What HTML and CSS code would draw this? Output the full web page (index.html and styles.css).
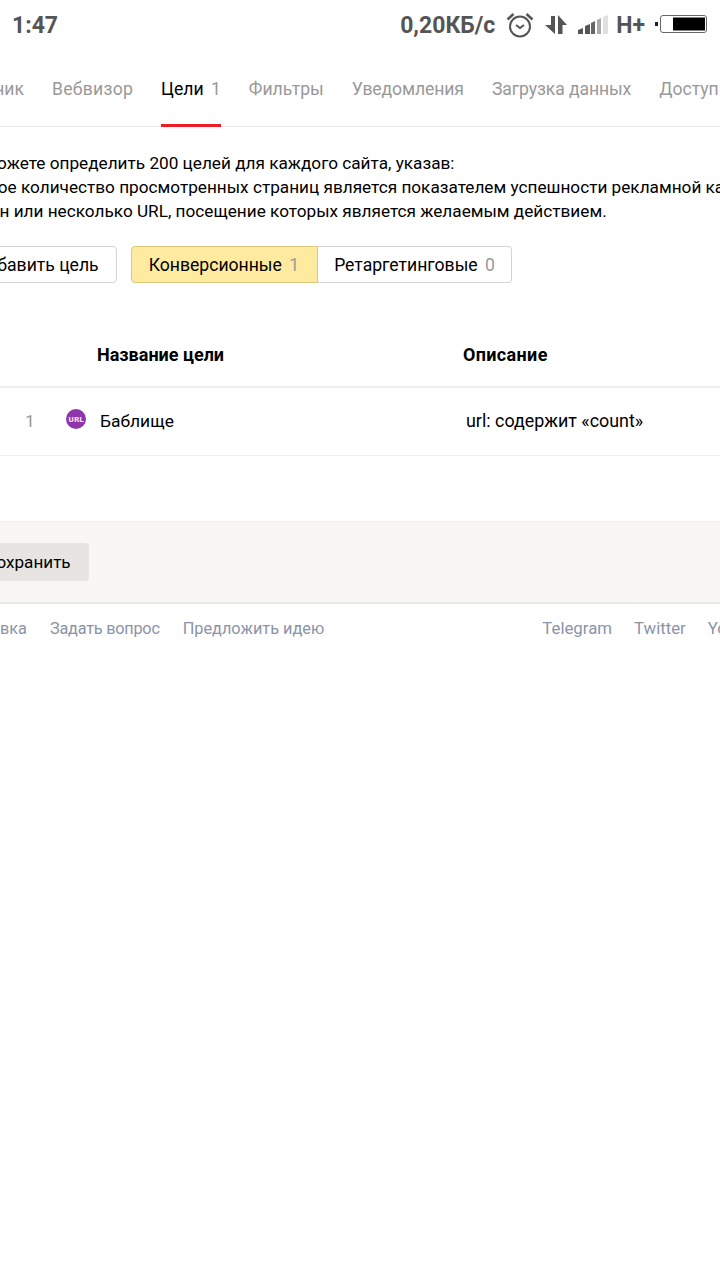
FILE: index.html
```html
<!DOCTYPE html>
<html lang="ru">
<head>
  <meta charset="UTF-8" />
  <meta name="viewport" content="width=device-width, initial-scale=1.0"/>
  <title>Цели</title>
  <link rel="stylesheet" href="styles.css">
</head>
<body>

  <div class="status-bar">
    <span class="time">1:47</span>
    <div class="status-right">
      <span class="speed">0,20КБ/с</span>
      <svg class="icon-alarm" width="28" height="26" viewBox="0 0 28 26" fill="none" stroke="#555">
        <circle cx="14" cy="14.5" r="10" stroke-width="2"/>
        <path d="M10 13l4 3 4-3" stroke-width="2"/>
        <path d="M1.500 7.500L7.500 2M26.500 7.500L20.500 2" stroke-width="2.500"/>
      </svg>
      <svg class="icon-arrows" width="22" height="20" viewBox="0 0 22 20" fill="#555">
        <path d="M10 1v18L0 10h6V1zM13 0l9 10h-4.500v9H13z"/>
      </svg>
      <svg class="icon-signal" width="30" height="20" viewBox="0 0 30 20">
        <path d="M0 15l5-2v6H0z" fill="#555"/>
        <path d="M7 11l5-2v10H7z" fill="#555"/>
        <path d="M13 8l4-2v13h-4z" fill="#666"/>
        <path d="M19 5l4-2v16h-4z" fill="#aaa"/>
        <path d="M25 2l5-2v19h-5z" fill="#e0e0e0"/>
      </svg>
      <span class="net">H+</span>
      <svg class="icon-battery" width="52" height="20" viewBox="0 0 52 20">
        <rect x="0" y="8" width="3" height="4" fill="#222"/>
        <rect x="5.500" y="1.500" width="46" height="17" rx="2.500" fill="#fff" stroke="#666"/>
        <rect x="18" y="3.500" width="32" height="13" fill="#000"/>
      </svg>
    </div>
  </div>

  <div class="page">
    <div class="tabs">
      <div class="tab">Счётчик</div>
      <div class="tab tab-wide">Вебвизор</div>
      <div class="tab active">Цели <span class="count">1</span></div>
      <div class="tab">Фильтры</div>
      <div class="tab tab-tight">Уведомления</div>
      <div class="tab tab-tight">Загрузка данных</div>
      <div class="tab">Доступ</div>
    </div>

    <div class="intro">
      <p>Вы можете определить 200 целей для каждого сайта, указав:</p>
      <p class="intro-item">какое количество просмотренных страниц является показателем успешности рекламной кампании;</p>
      <p class="intro-item">один или несколько URL, посещение которых является желаемым действием.</p>
    </div>

    <div class="actions">
      <button class="btn add-btn">Добавить цель</button>
      <div class="switch">
        <button class="btn seg seg-on">Конверсионные <span class="count">1</span></button>
        <button class="btn seg seg-off">Ретаргетинговые <span class="count">0</span></button>
      </div>
    </div>

    <div class="goals">
      <div class="goals-head">
        <div class="col-name">Название цели</div>
        <div class="col-desc">Описание</div>
      </div>
      <div class="goals-row">
        <div class="col-num">1</div>
        <svg class="url-badge" width="20" height="20" viewBox="0 0 20 20">
          <circle cx="10" cy="10" r="10" fill="#8e35ab"/>
          <text x="10" y="12.500" text-anchor="middle">URL</text>
        </svg>
        <div class="col-title">Баблище</div>
        <div class="col-text">url: содержит «count»</div>
      </div>
    </div>

    <div class="save-bar">
      <button class="save-btn">Сохранить</button>
    </div>

    <div class="footer">
      <div class="footer-left">
        <a>Справка</a>
        <a class="link-tight">Задать вопрос</a>
        <a>Предложить идею</a>
      </div>
      <div class="footer-right">
        <a>Telegram</a>
        <a>Twitter</a>
        <a>YouTube</a>
      </div>
    </div>
  </div>

</body>
</html>
```

FILE: styles.css
```css
html, body {
  margin: 0;
  padding: 0;
  background: #fff;
  overflow: hidden;
}

body {
  width: 720px;
  height: 1280px;
  font-family: Roboto, 'Liberation Sans', sans-serif;
  color: #000;
}

.status-bar {
  height: 50px;
  display: flex;
  align-items: center;
  justify-content: space-between;
  color: #555;
  font-weight: bold;
  font-size: 23px;
}

.time {
  margin-left: 12px;
}

.status-right {
  display: flex;
  align-items: center;
  margin-right: 13px;
}

.speed {
  margin-right: 11px;
}

.icon-alarm {
  margin-right: 11px;
}

.icon-arrows {
  margin-right: 11px;
}

.net {
  margin: 0 10px 0 8px;
}

.icon-battery {
  margin-top: -2px;
}

.page {
  width: 1000px;
  margin-left: -44px;
}

.tabs {
  display: flex;
  gap: 28px;
  height: 76px;
  border-bottom: 1px solid #e8e8e8;
  font-size: 17.600px;
  color: #999;
}

.tab {
  height: 77px;
  box-sizing: border-box;
  padding-top: 29px;
  white-space: nowrap;
}

.tab-wide {
  letter-spacing: 0.250px;
}

.tab-tight {
  letter-spacing: -0.100px;
}

.tab.active {
  color: #000;
  border-bottom: 3px solid #ee1c25;
}

.tab.active .count {
  margin-left: 3px;
}

.count {
  color: #999;
}

.intro {
  margin-top: 24px;
  font-size: 17.200px;
  line-height: 24px;
  white-space: nowrap;
}

.intro p {
  margin: 0;
}

.intro-item {
  padding-left: 14px;
}

.actions {
  display: flex;
  margin-top: 23px;
  gap: 14px;
}

.btn {
  height: 37px;
  font: inherit;
  font-size: 17.600px;
  background: #fff;
  color: #000;
  border: 1px solid #d4d4d4;
  border-radius: 4px;
  white-space: nowrap;
}

.add-btn {
  padding: 0 17px;
}

.switch {
  display: flex;
}

.seg .count {
  margin-left: 3px;
}

.seg-on {
  padding: 0 18px 0 17px;
  background: #ffeba0;
  border-color: #dcc77c;
  border-radius: 4px 0 0 4px;
}

.seg-off {
  padding: 0 16px 0 16px;
  border-left: 0;
  border-radius: 0 4px 4px 0;
}

.goals {
  margin-top: 43px;
  font-size: 17.400px;
}

.goals-head {
  display: flex;
  height: 56px;
  padding-bottom: 4px;
  align-items: center;
  font-size: 18px;
  font-weight: bold;
  border-bottom: 2px solid #eee;
}

.col-name {
  margin-left: 141px;
  width: 366px;
}

.col-desc {
  letter-spacing: 0.350px;
}

.goals-row {
  display: flex;
  align-items: center;
  height: 65px;
  padding-bottom: 2px;
  border-bottom: 1px solid #eee;
}

.col-num {
  margin-left: 69px;
  width: 41px;
  color: #999;
}

.url-badge {
  margin-top: -3px;
}

.url-badge text {
  font-family: 'DejaVu Sans', sans-serif;
  font-size: 7px;
  font-weight: bold;
  fill: #efe3f3;
}

.col-title {
  margin-left: 14px;
  width: 366px;
}

.col-text {
  font-size: 17.900px;
}

.save-bar {
  margin-top: 65px;
  height: 80px;
  background: #f9f7f3;
  border-top: 1px solid #f0ede7;
  border-bottom: 2px solid #e8e8e8;
  display: flex;
  align-items: center;
}

.save-btn {
  margin-left: 14px;
  width: 119px;
  height: 38px;
  padding: 0 9px 0 6px;
  font: inherit;
  font-size: 17.100px;
  background: #e6e5e2;
  border: 0;
  border-radius: 4px;
  color: #000;
}

.footer {
  display: flex;
  justify-content: space-between;
  align-items: baseline;
  width: 817px;
  margin-top: 14px;
  font-size: 16.300px;
  color: #8a94a8;
}

.footer-left {
  display: flex;
  gap: 23px;
  margin-left: 6px;
}

.link-tight {
  letter-spacing: -0.230px;
}

.footer-right {
  display: flex;
  gap: 22px;
  font-size: 16.800px;
}
```
